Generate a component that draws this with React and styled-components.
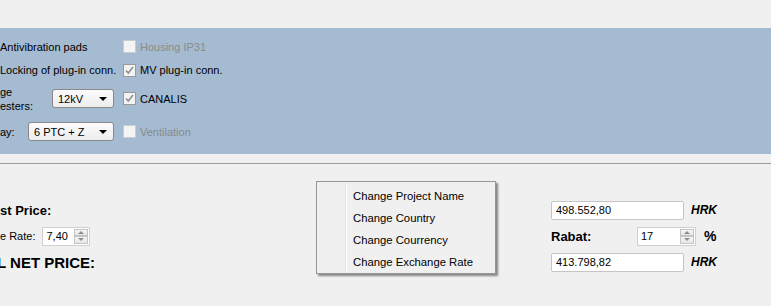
import React from 'react';
import styled, { createGlobalStyle } from 'styled-components';

const Global = createGlobalStyle`
  html, body { margin: 0; padding: 0; background: #f0f0f0; }
  body {
    font-family: "Liberation Sans", Arial, sans-serif;
    font-size: 11px;
    color: #000;
    overflow: hidden;
  }
`;

const Page = styled.div`
  position: relative;
  width: 771px;
  height: 306px;
  overflow: hidden;
  background: #f0f0f0;
`;

const TopStrip = styled.div`
  height: 28px;
`;

const OptionsPanel = styled.section`
  background: #a5bbd1;
  height: 126px;
  box-sizing: border-box;
  padding-top: 7px;
  display: flex;
  flex-direction: column;
`;

const OptionRow = styled.div`
  display: flex;
  align-items: center;
  height: ${p => p.$h}px;
`;

const LeftCell = styled.div`
  width: 114px;
  flex: none;
  margin-right: 9px;
  display: flex;
  align-items: center;
  justify-content: space-between;
  white-space: nowrap;
`;

const Label = styled.span`
  line-height: 14px;
  white-space: ${p => (p.$lines ? 'pre-line' : 'nowrap')};
`;

const CheckCell = styled.label`
  display: flex;
  align-items: center;
  gap: 4px;
  white-space: nowrap;
  color: ${p => (p.$disabled ? '#8a8a8a' : '#000')};
`;

const Box = styled.span`
  width: 13px;
  height: 13px;
  box-sizing: border-box;
  border: 1px solid ${p => (p.$disabled ? '#c9cdd2' : '#999')};
  background: ${p => (p.$disabled ? '#f4f4f4' : '#f3f3f3')};
  display: flex;
  align-items: center;
  justify-content: center;
`;

const Check = ({ checked, disabled }) => (
  <Box $disabled={disabled}>
    {checked && (
      <svg width="9" height="9" viewBox="0 0 9 9">
        <path d="M1 4.5 L3.3 7 L8 1" fill="none" stroke="#8c8c8c" strokeWidth="1.5" />
      </svg>
    )}
  </Box>
);

const SelectBox = styled.div`
  width: ${p => p.$w}px;
  height: 19px;
  box-sizing: border-box;
  border: 1px solid #8a8a8a;
  border-radius: 3px;
  background: linear-gradient(#fbfbfb, #ededed);
  display: flex;
  align-items: center;
  justify-content: space-between;
  padding: 0 6px 0 5px;
`;

const Arrow = styled.span`
  width: 0;
  height: 0;
  border-left: 4px solid transparent;
  border-right: 4px solid transparent;
  border-top: 4px solid #000;
`;

const Select = ({ w, children }) => (
  <SelectBox $w={w}>
    <span>{children}</span>
    <Arrow />
  </SelectBox>
);

const Separator = styled.hr`
  margin: 9px 0 0 0;
  border: 0;
  height: 1px;
  background: #9a9a9a;
`;

const PriceArea = styled.section`
  padding-top: 33px;
  display: flex;
  flex-direction: column;
`;

const PriceRow = styled.div`
  display: flex;
  align-items: center;
  height: 26px;
`;

const PriceLeft = styled.div`
  width: 551px;
  flex: none;
  display: flex;
  align-items: center;
  gap: 7px;
  white-space: nowrap;
`;

const BoldLabel = styled.span`
  font-weight: bold;
  font-size: ${p => p.$size || 13}px;
  margin-left: ${p => p.$shift || 0}px;
`;

const TextInput = styled.div`
  width: 133px;
  height: 19px;
  box-sizing: border-box;
  border: 1px solid #c5c5c5;
  border-radius: 2px;
  background: #fff;
  padding-left: 4px;
  display: flex;
  align-items: center;
`;

const Unit = styled.span`
  font-weight: bold;
  font-style: ${p => (p.$italic ? 'italic' : 'normal')};
  font-size: ${p => p.$size}px;
  margin-left: ${p => p.$gap}px;
`;

const RabatLabel = styled.span`
  width: 86px;
  font-weight: bold;
  font-size: 13px;
`;

const SpinBox = styled.div`
  width: ${p => p.$w}px;
  height: 19px;
  box-sizing: border-box;
  border: 1px solid #d0d0d0;
  background: #fff;
  display: flex;
`;

const SpinValue = styled.span`
  flex: 1;
  padding-left: 3px;
  display: flex;
  align-items: center;
`;

const SpinButtons = styled.div`
  width: 14px;
  margin: 1px;
  display: flex;
  flex-direction: column;
`;

const SpinBtn = styled.span`
  flex: 1;
  border: 1px solid #c4c4c4;
  background: linear-gradient(#f6f6f6, #e6e6e6);
  display: flex;
  align-items: center;
  justify-content: center;
  &::after {
    content: '';
    width: 0;
    height: 0;
    border-left: 3px solid transparent;
    border-right: 3px solid transparent;
    ${p => (p.$up ? 'border-bottom: 3px solid #8d8d8d;' : 'border-top: 3px solid #8d8d8d;')}
  }
`;

const Spinner = ({ w, value }) => (
  <SpinBox $w={w}>
    <SpinValue>{value}</SpinValue>
    <SpinButtons>
      <SpinBtn $up />
      <SpinBtn />
    </SpinButtons>
  </SpinBox>
);

const Menu = styled.ul`
  position: absolute;
  left: 316px;
  top: 181px;
  width: 180px;
  box-sizing: border-box;
  margin: 0;
  padding: 3px 1px 0 1px;
  list-style: none;
  background: #f0f0f0;
  border: 1px solid #979797;
  box-shadow: 2px 2px 2px rgba(0, 0, 0, 0.45);
  &::before {
    content: '';
    position: absolute;
    left: 28px;
    top: 1px;
    bottom: 1px;
    width: 1px;
    background: #e2e3e3;
    border-right: 1px solid #ffffff;
  }
`;

const MenuItem = styled.li`
  height: 22px;
  line-height: 22px;
  padding-left: 35px;
  font-size: 11.3px;
  white-space: nowrap;
`;

export default function App() {
  return (
    <Page>
      <Global />
      <TopStrip />
      <OptionsPanel>
        <OptionRow $h={23}>
          <LeftCell><Label>Antivibration pads</Label></LeftCell>
          <CheckCell $disabled><Check disabled />Housing IP31</CheckCell>
        </OptionRow>
        <OptionRow $h={24}>
          <LeftCell><Label>Locking of plug-in conn.</Label></LeftCell>
          <CheckCell><Check checked />MV plug-in conn.</CheckCell>
        </OptionRow>
        <OptionRow $h={33}>
          <LeftCell>
            <Label $lines>{'ge\nesters:'}</Label>
            <Select w={62}>12kV</Select>
          </LeftCell>
          <CheckCell><Check checked />CANALIS</CheckCell>
        </OptionRow>
        <OptionRow $h={33}>
          <LeftCell>
            <Label>ay:</Label>
            <Select w={86}>6 PTC + Z</Select>
          </LeftCell>
          <CheckCell $disabled><Check disabled />Ventilation</CheckCell>
        </OptionRow>
      </OptionsPanel>
      <Separator />
      <PriceArea>
        <PriceRow>
          <PriceLeft><BoldLabel>st Price:</BoldLabel></PriceLeft>
          <TextInput>498.552,80</TextInput>
          <Unit $italic $size={12} $gap={7}>HRK</Unit>
        </PriceRow>
        <PriceRow>
          <PriceLeft>
            <Label>e Rate:</Label>
            <Spinner w={48} value="7,40" />
          </PriceLeft>
          <RabatLabel>Rabat:</RabatLabel>
          <Spinner w={59} value="17" />
          <Unit $size={14} $gap={8}>%</Unit>
        </PriceRow>
        <PriceRow>
          <PriceLeft><BoldLabel $size={15} $shift={-3}>L NET PRICE:</BoldLabel></PriceLeft>
          <TextInput>413.798,82</TextInput>
          <Unit $italic $size={12} $gap={7}>HRK</Unit>
        </PriceRow>
      </PriceArea>
      <Menu>
        <MenuItem>Change Project Name</MenuItem>
        <MenuItem>Change Country</MenuItem>
        <MenuItem>Change Courrency</MenuItem>
        <MenuItem>Change Exchange Rate</MenuItem>
      </Menu>
    </Page>
  );
}
